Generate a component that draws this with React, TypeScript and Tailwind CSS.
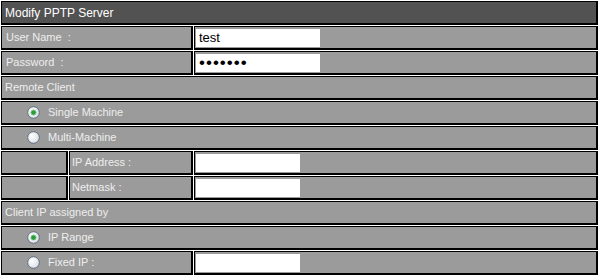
const cell =
  "border-t border-l border-r-2 border-b-2 border-black bg-[#9b9b9b] h-[24px] flex items-center"

const font = { fontFamily: '"Liberation Sans", Arial, sans-serif' }

function Radio({ checked }: { checked?: boolean }) {
  return (
    <svg width="13" height="13" viewBox="0 0 13 13" className="shrink-0">
      <defs>
        <radialGradient id="rg" cx="0.35" cy="0.35" r="0.8">
          <stop offset="0" stopColor="#ffffff" />
          <stop offset="1" stopColor="#d7dce4" />
        </radialGradient>
      </defs>
      <circle cx="6.5" cy="6.5" r="5.8" fill="url(#rg)" stroke="#5f6f80" strokeWidth="1" />
      {checked && <circle cx="6.5" cy="6.5" r="2.6" fill="#2f9a3a" stroke="#7bd08a" strokeWidth="0.8" />}
    </svg>
  )
}

function Input({ value, type = "text", w, extra = "" }: { value?: string; type?: string; w: string; extra?: string }) {
  return (
    <input
      type={type}
      defaultValue={value}
      className={`${w} h-[18px] bg-white text-black text-[13px] px-[3px] outline-none border-0 ${extra}`}
      style={font}
    />
  )
}

export default function App() {
  return (
    <div className="w-[599px] h-[278px] bg-white p-px text-[11px] text-[#eeeeee]" style={font}>
      <div className="flex flex-col gap-px">
        <div className={`${cell} bg-[#525252] pl-[3px] text-[12px] text-white`}>Modify PPTP Server</div>

        <div className="flex gap-px">
          <div className={`${cell} w-[192px] pl-[4px]`}>User Name&nbsp;&nbsp;:</div>
          <div className={`${cell} flex-1 pl-[1px]`}>
            <Input value="test" w="w-[124px]" />
          </div>
        </div>

        <div className="flex gap-px">
          <div className={`${cell} w-[192px] pl-[4px]`}>Password&nbsp;&nbsp;:</div>
          <div className={`${cell} flex-1 pl-[1px]`}>
            <Input value="1234567" type="password" w="w-[124px]" extra="!text-[17px] tracking-[1px]" />
          </div>
        </div>

        <div className={`${cell} pl-[3px]`}>Remote Client</div>

        <div className={`${cell} pl-[25px] gap-[8px]`}>
          <Radio checked />
          <span>Single Machine</span>
        </div>

        <div className={`${cell} pl-[25px] gap-[8px]`}>
          <Radio />
          <span>Multi-Machine</span>
        </div>

        <div className="flex gap-px">
          <div className={`${cell} w-[67px]`}></div>
          <div className={`${cell} w-[124px] pl-[2px]`}>IP Address :</div>
          <div className={`${cell} flex-1 pl-[1px]`}>
            <Input w="w-[104px]" />
          </div>
        </div>

        <div className="flex gap-px">
          <div className={`${cell} w-[67px]`}></div>
          <div className={`${cell} w-[124px] pl-[2px]`}>Netmask :</div>
          <div className={`${cell} flex-1 pl-[1px]`}>
            <Input w="w-[104px]" />
          </div>
        </div>

        <div className={`${cell} pl-[3px]`}>Client IP assigned by</div>

        <div className={`${cell} pl-[25px] gap-[8px]`}>
          <Radio checked />
          <span>IP Range</span>
        </div>

        <div className="flex gap-px">
          <div className={`${cell} w-[192px] pl-[25px] gap-[8px]`}>
            <Radio />
            <span>Fixed IP :</span>
          </div>
          <div className={`${cell} flex-1 pl-[1px]`}>
            <Input w="w-[104px]" />
          </div>
        </div>
      </div>
    </div>
  )
}
